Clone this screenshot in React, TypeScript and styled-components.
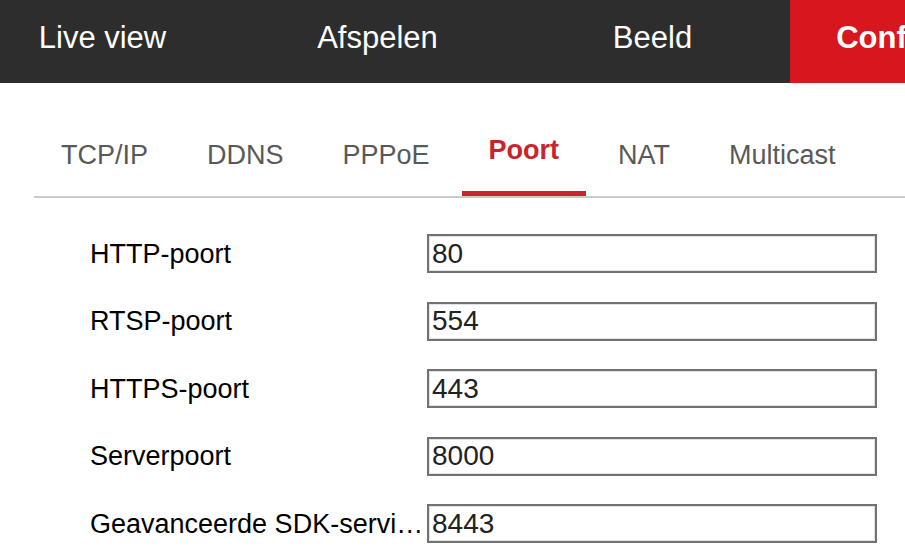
import { FC } from "react";
import styled, { createGlobalStyle } from "styled-components";

// Global
const GlobalStyle = createGlobalStyle`
  html, body {
    margin: 0;
    padding: 0;
    background: #ffffff;
    overflow: hidden;
  }
  body {
    font-family: "Liberation Sans", Arial, sans-serif;
  }
`;

// Styled Components
const StyledPage = styled.div`
  width: 905px;
  height: 560px;
  overflow: hidden;
  background: #ffffff;
`;

const StyledNavBar = styled.nav`
  display: flex;
  height: 83px;
  margin-left: -35px;
  background: #2d2d2d;
`;

const StyledNavItem = styled.div<{ $active?: boolean }>`
  flex: 0 0 275px;
  box-sizing: border-box;
  padding-top: 22px;
  text-align: center;
  white-space: nowrap;
  font-size: 31px;
  line-height: 31px;
  color: #ffffff;
  font-weight: ${({ $active }) => ($active ? 700 : 400)};
  background: ${({ $active }) => ($active ? "#d7161e" : "transparent")};
`;

const StyledTabBar = styled.div`
  display: flex;
  gap: 5px;
  height: 113px;
  margin-left: 34px;
  border-bottom: 2px solid #cbcbcb;
`;

const StyledTab = styled.div<{ $active?: boolean }>`
  position: relative;
  padding: ${({ $active }) => ($active ? "54px" : "59px")} 27px 0;
  font-size: 27px;
  line-height: 27px;
  font-weight: ${({ $active }) => ($active ? 700 : 400)};
  color: ${({ $active }) => ($active ? "#c9232b" : "#595959")};
  white-space: nowrap;

  &::after {
    content: "";
    display: ${({ $active }) => ($active ? "block" : "none")};
    position: absolute;
    left: 0;
    right: 0;
    bottom: 0;
    height: 5px;
    background: #c8262d;
  }
`;

const StyledForm = styled.div`
  display: flex;
  flex-direction: column;
  gap: 28.5px;
  padding: 36px 0 0 90px;
`;

const StyledRow = styled.div`
  display: flex;
  align-items: center;
  height: 39px;
`;

const StyledLabel = styled.label`
  flex: 0 0 337px;
  overflow: hidden;
  white-space: nowrap;
  text-overflow: ellipsis;
  font-size: 27px;
  line-height: 32px;
  color: #000000;
`;

const StyledInput = styled.input`
  box-sizing: border-box;
  width: 450px;
  height: 39px;
  margin: 0;
  padding: 0 0 0 3px;
  border: 2px solid #727272;
  box-shadow: inset 0 0 0 1px #e2e2e2;
  border-radius: 0;
  outline: none;
  background: #ffffff;
  font-family: "Liberation Sans", Arial, sans-serif;
  font-size: 28px;
  color: #222222;
`;

const navItems = ["Live view", "Afspelen", "Beeld", "Configuratie"];
const tabs = ["TCP/IP", "DDNS", "PPPoE", "Poort", "NAT", "Multicast"];
const ports = [
  { label: "HTTP-poort", value: "80" },
  { label: "RTSP-poort", value: "554" },
  { label: "HTTPS-poort", value: "443" },
  { label: "Serverpoort", value: "8000" },
  { label: "Geavanceerde SDK-servicepoort", value: "8443" },
];

const App: FC = () => {
  return (
    <StyledPage>
      <GlobalStyle />
      <StyledNavBar>
        {navItems.map((item) => (
          <StyledNavItem key={item} $active={item === "Configuratie"}>
            {item}
          </StyledNavItem>
        ))}
      </StyledNavBar>
      <StyledTabBar>
        {tabs.map((tab) => (
          <StyledTab key={tab} $active={tab === "Poort"}>
            {tab}
          </StyledTab>
        ))}
      </StyledTabBar>
      <StyledForm>
        {ports.map((port) => (
          <StyledRow key={port.label}>
            <StyledLabel>{port.label}</StyledLabel>
            <StyledInput defaultValue={port.value} readOnly />
          </StyledRow>
        ))}
      </StyledForm>
    </StyledPage>
  );
};

export default App;
